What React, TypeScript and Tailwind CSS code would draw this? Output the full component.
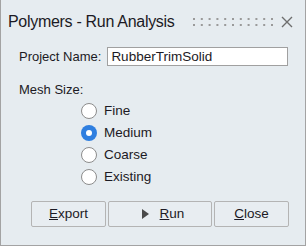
const FONT = { fontFamily: '"Liberation Sans", Arial, sans-serif' }

const SIZES = ['Fine', 'Medium', 'Coarse', 'Existing']

function Grip() {
  return (
    <svg width="80" height="10" viewBox="0 0 80 10" className="block">
      {Array.from({ length: 11 }).map((_, i) => (
        <g key={i} fill="#9a9a9a">
          <rect x={i * 7.8} y={1} width={2} height={2} />
          <rect x={i * 7.8} y={7} width={2} height={2} />
        </g>
      ))}
    </svg>
  )
}

function Radio({ checked }: { checked?: boolean }) {
  if (checked) {
    return (
      <span className="w-[16px] h-[16px] rounded-full bg-[#2f7fe0] flex items-center justify-center">
        <span className="w-[6px] h-[6px] rounded-full bg-white" />
      </span>
    )
  }
  return <span className="w-[16px] h-[16px] rounded-full bg-white border border-[#8c8c8c] box-border" />
}

export default function App() {
  const size = 'Medium'
  return (
    <div
      style={FONT}
      className="w-[306px] h-[246px] bg-[#e6ecf0] border-x border-b border-[#a3a3a3] text-[#1c1a24] text-[13px] box-border"
    >
      {/* title bar */}
      <div className="h-[44px] flex items-center pl-[7px]">
        <span className="text-[16px] tracking-[-0.3px] leading-none">Polymers - Run Analysis</span>
        <div className="ml-[18px]"><Grip /></div>
        <svg width="12" height="12" viewBox="0 0 12 12" className="ml-[8px]">
          <path d="M1 1 L11 11 M11 1 L1 11" stroke="#6e6e6e" strokeWidth="1.4" />
        </svg>
      </div>

      {/* project name */}
      <div className="flex items-center h-[19px] mt-[3px] pl-[18px]">
        <span className="leading-none">Project Name:</span>
        <div className="ml-[6px] w-[181px] h-[19px] bg-white border border-[#a0a0a0] box-border flex items-center pl-[3px] text-[13.5px] leading-none">
          RubberTrimSolid
        </div>
      </div>

      {/* mesh size */}
      <div className="mt-[16px] pl-[18px] h-[16px] leading-[16px]">Mesh Size:</div>
      <div className="mt-[2px] pl-[80px]">
        {SIZES.map(s => (
          <div key={s} className="h-[22px] flex items-center">
            <Radio checked={s === size} />
            <span className="ml-[7px] leading-none text-[13.5px]">{s}</span>
          </div>
        ))}
      </div>

      {/* buttons */}
      <div className="mt-[13px] pl-[30px] flex gap-[2px]">
        <button className="w-[75px] h-[26px] border border-[#b4b4b4] rounded-[2px] bg-[#e8edf1] flex items-center justify-center text-[13.5px]">
          <span><span className="underline underline-offset-[1px]">E</span>xport</span>
        </button>
        <button className="w-[104px] h-[26px] border border-[#b4b4b4] rounded-[2px] bg-[#e8edf1] flex items-center justify-center text-[13.5px] pl-[6px]">
          <svg width="7" height="10" viewBox="0 0 7 10"><path d="M0 0 L7 5 L0 10 Z" fill="#4a4a4a" /></svg>
          <span className="ml-[11px]"><span className="underline underline-offset-[1px]">R</span>un</span>
        </button>
        <button className="w-[75px] h-[26px] border border-[#b4b4b4] rounded-[2px] bg-[#e8edf1] flex items-center justify-center text-[13.5px]">
          <span><span className="underline underline-offset-[1px]">C</span>lose</span>
        </button>
      </div>
    </div>
  )
}
